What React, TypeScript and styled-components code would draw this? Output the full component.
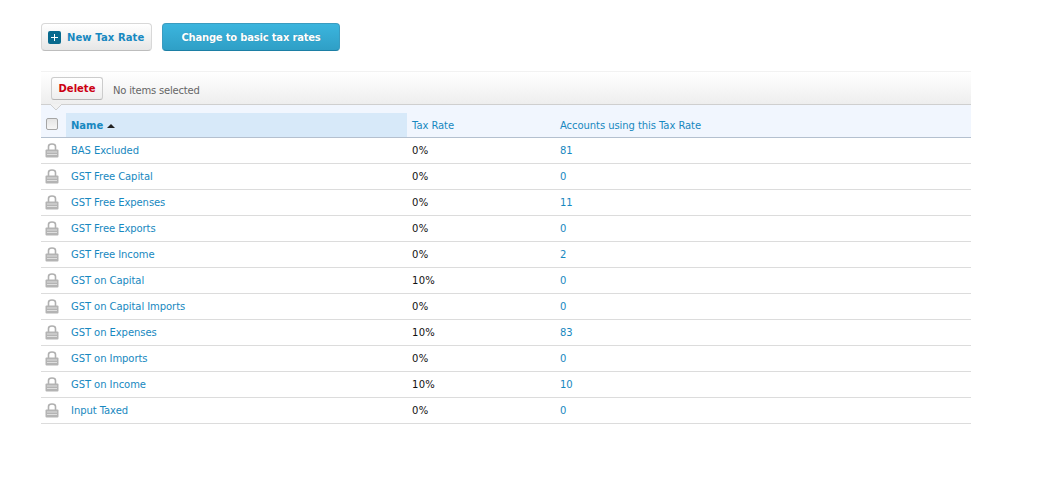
import React from 'react';
import styled, { createGlobalStyle } from 'styled-components';

const GlobalStyle = createGlobalStyle`
  body {
    margin: 0;
    background: #fff;
    font-family: "DejaVu Sans", Verdana, sans-serif;
    font-size: 10px;
  }
`;

const Page = styled.div`
  width: 930px;
  padding: 23px 0 0 41px;
`;

const Actions = styled.div`
  display: flex;
  gap: 10px;
  height: 28px;
  margin-bottom: 20px;
`;

const NewButton = styled.button`
  display: flex;
  align-items: center;
  gap: 6px;
  width: 111px;
  height: 28px;
  padding: 0 0 0 6px;
  border: 1px solid #d8d8d8;
  border-bottom-color: #bdbdbd;
  border-radius: 4px;
  background: linear-gradient(#ffffff, #e6e6e6);
  color: #1788c0;
  font: bold 10px "DejaVu Sans", sans-serif;
  letter-spacing: 0.1px;
  white-space: nowrap;
`;

const PlusBox = styled.span`
  display: flex;
  width: 13px;
  height: 13px;
  border-radius: 2px;
  background: #086a8e;
`;

const BlueButton = styled.button`
  width: 178px;
  height: 28px;
  padding: 0;
  border: 1px solid #3a9cc0;
  border-bottom-color: #1c7fa5;
  border-radius: 4px;
  background: linear-gradient(#3bb5de, #2f9fc6);
  color: #fff;
  font: bold 10px "DejaVu Sans", sans-serif;
  letter-spacing: -0.2px;
  text-shadow: 0 0 1px rgba(0, 70, 100, 0.4);
`;

const Toolbar = styled.div`
  position: relative;
  display: flex;
  align-items: center;
  gap: 10px;
  height: 32px;
  padding-left: 10px;
  border-top: 1px solid #f2f2f2;
  border-bottom: 1px solid #cfcfcf;
  background: linear-gradient(#ffffff, #eeeeee);
`;

const DeleteButton = styled.button`
  width: 52px;
  height: 23px;
  padding: 0;
  margin-top: 1px;
  border: 1px solid #cccccc;
  border-bottom-color: #b5b5b5;
  border-radius: 3px;
  background: linear-gradient(#ffffff, #eeeeee);
  color: #cc0012;
  font: bold 10px "DejaVu Sans", sans-serif;
`;

const Status = styled.span`
  margin-top: 4px;
  color: #666;
  font-size: 10px;
  letter-spacing: -0.2px;
`;

const Notch = styled.svg`
  position: absolute;
  left: 9px;
  bottom: -6px;
`;

const HeaderRow = styled.div`
  display: grid;
  grid-template-columns: 25px 341px 148px 1fr;
  align-items: stretch;
  height: 32px;
  border-bottom: 1px solid #b4c0cf;
  background: #f1f6fe;
`;

const CheckCell = styled.div`
  display: flex;
  align-items: center;
  padding: 6px 0 0 5px;
`;

const CheckBox = styled.span`
  width: 10px;
  height: 10px;
  border: 1px solid #a5a5a5;
  border-radius: 2px;
  background: linear-gradient(#e4e4e4, #f6f6f6);
`;

const HeaderCell = styled.div<{ $active?: boolean }>`
  display: flex;
  align-items: center;
  gap: 4px;
  margin-top: 8px;
  padding-left: 5px;
  background: ${(p) => (p.$active ? '#d7e9f9' : 'transparent')};
  color: #1788c0;
  font-size: 10px;
  font-weight: ${(p) => (p.$active ? 'bold' : 'normal')};
  letter-spacing: ${(p) => (p.$active ? '0' : '-0.07px')};
`;

const SortArrow = styled.span`
  width: 0;
  height: 0;
  margin-top: 1px;
  border-left: 4px solid transparent;
  border-right: 4px solid transparent;
  border-bottom: 4px solid #222;
`;

const Row = styled.div`
  display: grid;
  grid-template-columns: 30px 341px 148px 1fr;
  align-items: center;
  height: 25px;
  border-bottom: 1px solid #dcdcdc;
  font-size: 10px;
`;

const LockCell = styled.div`
  display: flex;
  padding: 0 0 0 4px;
`;

const LinkText = styled.span`
  color: #1788c0;
  letter-spacing: -0.07px;
`;

const Rate = styled.span`
  color: #111;
  letter-spacing: 0.3px;
`;

interface ITaxRate {
  name: string;
  rate: string;
  accounts: number;
}

const taxRates: ITaxRate[] = [
  { name: 'BAS Excluded', rate: '0%', accounts: 81 },
  { name: 'GST Free Capital', rate: '0%', accounts: 0 },
  { name: 'GST Free Expenses', rate: '0%', accounts: 11 },
  { name: 'GST Free Exports', rate: '0%', accounts: 0 },
  { name: 'GST Free Income', rate: '0%', accounts: 2 },
  { name: 'GST on Capital', rate: '10%', accounts: 0 },
  { name: 'GST on Capital Imports', rate: '0%', accounts: 0 },
  { name: 'GST on Expenses', rate: '10%', accounts: 83 },
  { name: 'GST on Imports', rate: '0%', accounts: 0 },
  { name: 'GST on Income', rate: '10%', accounts: 10 },
  { name: 'Input Taxed', rate: '0%', accounts: 0 },
];

const LockIcon = () => (
  <svg width="14" height="15" viewBox="0 0 14 15">
    <path d="M3.5 7V3.5Q3.5 1 7 1t3.5 2.5V7" fill="none" stroke="#b0b0b0" strokeWidth="1.6" />
    <rect x="0.5" y="6.5" width="13" height="8" rx="1" fill="#b4b4b4" />
    <path d="M2 9h10M2 11.5h10" stroke="#dedede" strokeWidth="1" />
  </svg>
);

const App = () => {
  return (
    <Page>
      <GlobalStyle />
      <Actions>
        <NewButton>
          <PlusBox>
            <svg width="13" height="13" viewBox="0 0 13 13">
              <path d="M6.5 3v7M3 6.5h7" stroke="#fff" strokeWidth="1" />
            </svg>
          </PlusBox>
          New Tax Rate
        </NewButton>
        <BlueButton>Change to basic tax rates</BlueButton>
      </Actions>
      <Toolbar>
        <DeleteButton>Delete</DeleteButton>
        <Status>No items selected</Status>
        <Notch width="12" height="6" viewBox="0 0 12 6">
          <path d="M0 0l6 6 6-6z" fill="#f1f1f1" />
          <path d="M0 0l6 6 6-6" fill="none" stroke="#cfcfcf" />
        </Notch>
      </Toolbar>
      <HeaderRow>
        <CheckCell>
          <CheckBox />
        </CheckCell>
        <HeaderCell $active>
          Name <SortArrow />
        </HeaderCell>
        <HeaderCell>Tax Rate</HeaderCell>
        <HeaderCell>Accounts using this Tax Rate</HeaderCell>
      </HeaderRow>
      {taxRates.map((item) => (
        <Row key={item.name}>
          <LockCell>
            <LockIcon />
          </LockCell>
          <LinkText>{item.name}</LinkText>
          <Rate>{item.rate}</Rate>
          <LinkText>{item.accounts}</LinkText>
        </Row>
      ))}
    </Page>
  );
};

export default App;
